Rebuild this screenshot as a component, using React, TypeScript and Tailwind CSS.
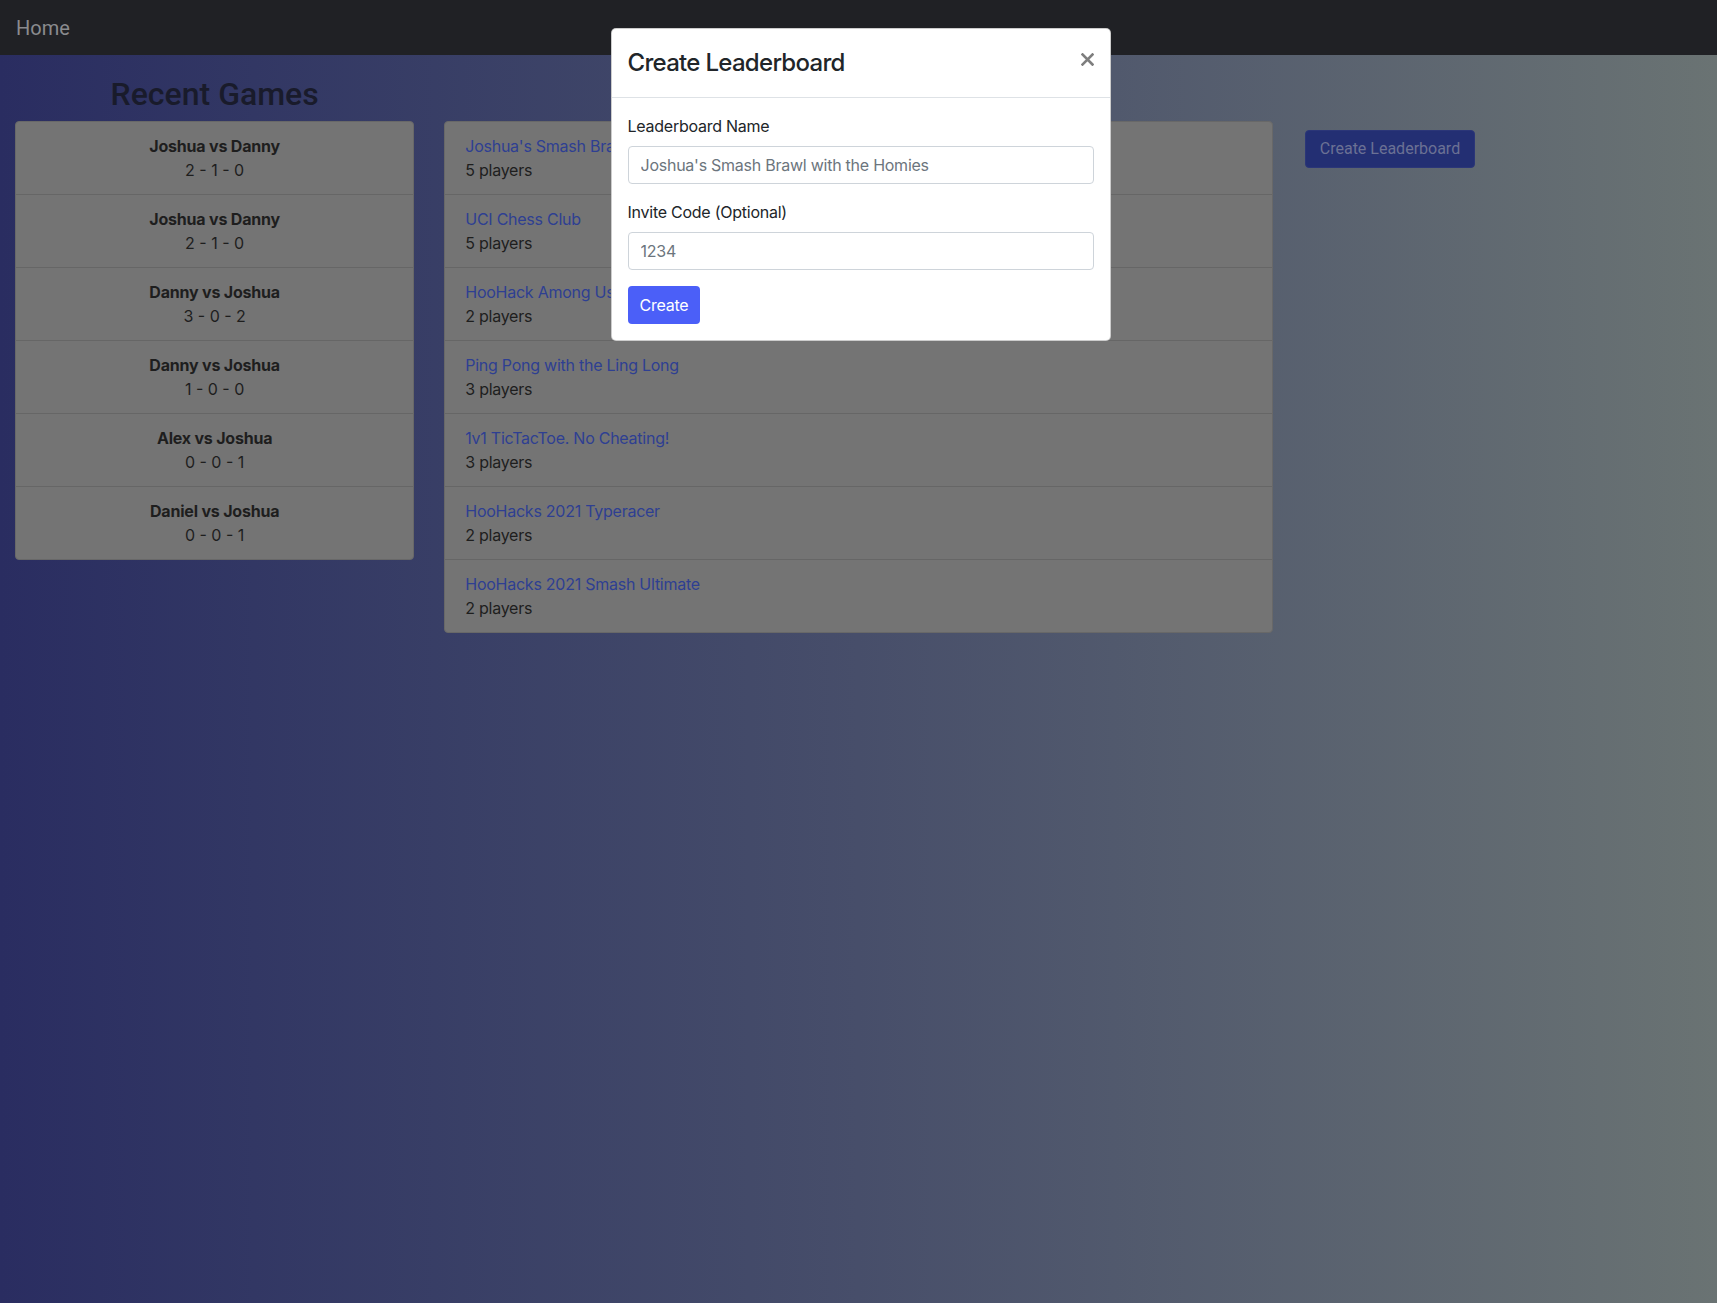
import React from "react";

const games = [
  { name: "Joshua vs Danny", score: "2 - 1 - 0" },
  { name: "Joshua vs Danny", score: "2 - 1 - 0" },
  { name: "Danny vs Joshua", score: "3 - 0 - 2" },
  { name: "Danny vs Joshua", score: "1 - 0 - 0" },
  { name: "Alex vs Joshua", score: "0 - 0 - 1" },
  { name: "Daniel vs Joshua", score: "0 - 0 - 1" },
];

const boards = [
  { name: "Joshua's Smash Brawl with the Homies", players: 5 },
  { name: "UCI Chess Club", players: 5 },
  { name: "HooHack Among Us", players: 2 },
  { name: "Ping Pong with the Ling Long", players: 3 },
  { name: "1v1 TicTacToe. No Cheating!", players: 3 },
  { name: "HooHacks 2021 Typeracer", players: 2 },
  { name: "HooHacks 2021 Smash Ultimate", players: 2 },
];

export default function App() {
  return (
    <div className="relative min-h-screen flex flex-col font-['Inter',sans-serif] text-[16px] leading-6 text-[#1e1e1e] tracking-[-0.25px]">
      <nav className="h-[55px] shrink-0 bg-[#202125] px-4 flex items-center">
        <span className="font-['Roboto',sans-serif] text-[20px] leading-[30px] tracking-normal text-[#8a8b8e]">Home</span>
      </nav>

      <main className="flex-1 bg-gradient-to-r from-[#2a2d61] via-[#474e6a] to-[#6a7373]">
        <div className="grid grid-cols-[1fr_2fr_1fr] pt-5">
          <div className="px-[15px]">
            <h2 className="text-center font-['Roboto',sans-serif] font-medium text-[32px] leading-[38px] tracking-normal mb-2 text-[#191b2b]">
              Recent Games
            </h2>
          </div>
          <div />
          <div />
        </div>
        <div className="grid grid-cols-[1fr_2fr_1fr] items-start">
          <div className="px-[15px]">
            <div className="rounded-[4px] border border-[#686868] bg-[#747474] overflow-hidden">
              {games.map((g, i) => (
                <div
                  key={i}
                  className="px-5 py-3 text-center border-b border-[#666666] last:border-b-0"
                >
                  <div className="font-bold text-[#1e1e1e] tracking-[-0.2px]">{g.name}</div>
                  <div className="text-[#1e1e1e] tracking-normal">{g.score}</div>
                </div>
              ))}
            </div>
          </div>
          <div className="px-[15px]">
            <div className="rounded-[4px] border border-[#686868] bg-[#747474] overflow-hidden">
              {boards.map((b, i) => (
                <div key={i} className="px-5 py-3 border-b border-[#666666] last:border-b-0">
                  <div className="text-[#2e3f92]">{b.name}</div>
                  <div className="text-[#1e1e1e]">{b.players} players</div>
                </div>
              ))}
            </div>
          </div>
          <div className="px-[15px]">
            <button className="mt-[9px] ml-0.5 h-[38px] px-[14px] rounded-[4px] bg-[#232f73] border border-[#2b3678] font-['Roboto',sans-serif] text-[16px] leading-6 tracking-normal text-[#6b7194]">
              Create Leaderboard
            </button>
          </div>
        </div>
      </main>

      <div className="absolute left-[calc(50%-248px)] top-[28px] w-[500px] bg-white rounded-[5px] border border-[#00000033]">
        <div className="flex items-start justify-between p-4 border-b border-[#dee2e6]">
          <h4 className="text-[24px] leading-[36px] font-medium tracking-[-0.7px] text-[#212529]">Create Leaderboard</h4>
          <button className="-mt-4 -mr-4 -mb-4 p-4 text-[24px] leading-none font-bold text-black opacity-50">
            <svg width="13" height="13" viewBox="0 0 13 13" className="mt-[8px]">
              <path d="M1.5 1.5 L11.5 11.5 M11.5 1.5 L1.5 11.5" stroke="currentColor" strokeWidth="2.6" strokeLinecap="square" />
            </svg>
          </button>
        </div>
        <div className="p-4">
          <div className="mb-4">
            <label className="block mb-2 text-[#212529]">Leaderboard Name</label>
            <input
              className="w-full h-[38px] px-3 border border-[#ced4da] rounded-[4px] text-[16px] tracking-[-0.25px] text-[#495057] placeholder:text-[#6c757d] outline-none"
              placeholder="Joshua's Smash Brawl with the Homies"
            />
          </div>
          <div className="mb-4">
            <label className="block mb-2 text-[#212529]">Invite Code (Optional)</label>
            <input
              className="w-full h-[38px] px-3 border border-[#ced4da] rounded-[4px] text-[16px] tracking-[-0.25px] text-[#495057] placeholder:text-[#6c757d] outline-none"
              placeholder="1234"
            />
          </div>
          <button className="h-[38px] px-3 rounded-[4px] bg-[#4b5ff8] text-white leading-6">Create</button>
        </div>
      </div>
    </div>
  );
}
